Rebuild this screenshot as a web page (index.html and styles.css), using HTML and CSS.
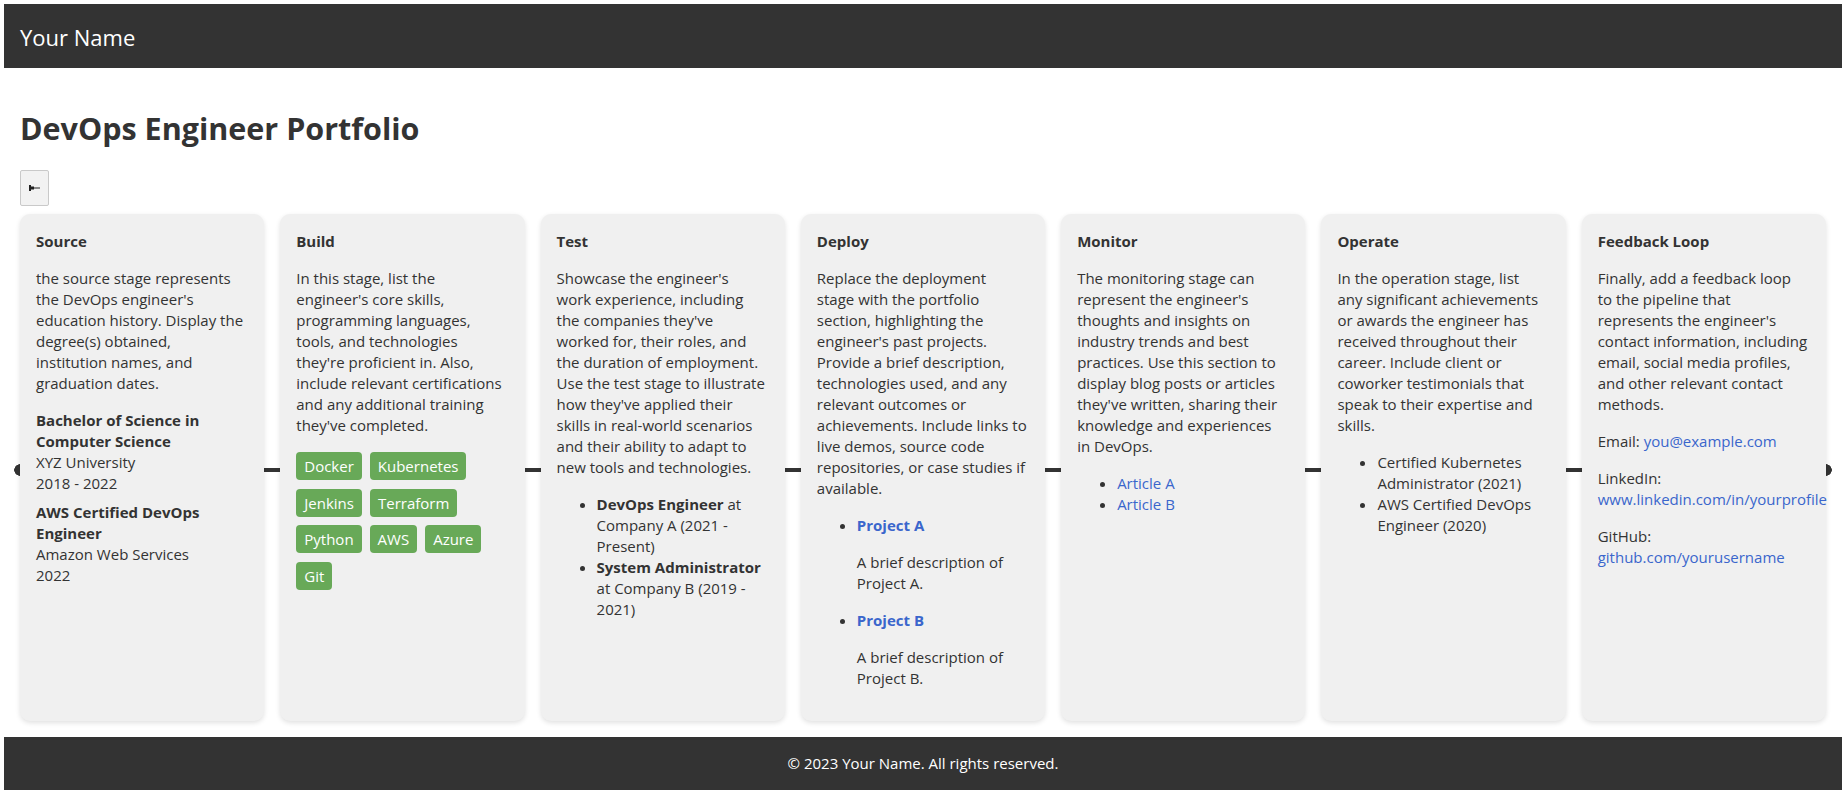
FILE: index.html
```html
<!DOCTYPE html>
<html lang="en">
<head>
<meta charset="utf-8">
<title>DevOps Engineer Portfolio</title>
<link rel="stylesheet" href="styles.css">
</head>
<body>
<header class="site-header">
  <div class="brand">Your Name</div>
</header>
<main class="main">
  <h1 class="page-title">DevOps Engineer Portfolio</h1>
  <button class="toggle-btn" type="button" aria-label="Toggle">
    <svg width="11" height="6" viewBox="0 0 11 6"><rect x="0" y="0" width="2" height="6" fill="#222"/><rect x="2" y="1.5" width="3" height="3" fill="#222"/><rect x="5" y="2.5" width="6" height="1" fill="#222"/></svg>
  </button>
  <div class="pipeline">
    <section class="stage">
      <h3 class="stage-title">Source</h3>
      <p>the source stage represents<br>the DevOps engineer's<br>education history. Display the<br>degree(s) obtained,<br>institution names, and<br>graduation dates.</p>
      <div class="edu"><strong>Bachelor of Science in<br>Computer Science</strong><br>XYZ University<br>2018 - 2022</div>
      <div class="edu"><strong>AWS Certified DevOps<br>Engineer</strong><br>Amazon Web Services<br>2022</div>
    </section>
    <section class="stage">
      <h3 class="stage-title">Build</h3>
      <p>In this stage, list the<br>engineer's core skills,<br>programming languages,<br>tools, and technologies<br>they're proficient in. Also,<br>include relevant certifications<br>and any additional training<br>they've completed.</p>
      <div class="tags">
        <span class="tag">Docker</span>
        <span class="tag">Kubernetes</span>
        <span class="tag">Jenkins</span>
        <span class="tag">Terraform</span>
        <span class="tag">Python</span>
        <span class="tag">AWS</span>
        <span class="tag">Azure</span>
        <span class="tag">Git</span>
      </div>
    </section>
    <section class="stage">
      <h3 class="stage-title">Test</h3>
      <p>Showcase the engineer's<br>work experience, including<br>the companies they've<br>worked for, their roles, and<br>the duration of employment.<br>Use the test stage to illustrate<br>how they've applied their<br>skills in real-world scenarios<br>and their ability to adapt to<br>new tools and technologies.</p>
      <ul class="list">
        <li><strong>DevOps Engineer</strong> at<br>Company A (2021 -<br>Present)</li>
        <li><strong>System Administrator</strong><br>at Company B (2019 -<br>2021)</li>
      </ul>
    </section>
    <section class="stage">
      <h3 class="stage-title">Deploy</h3>
      <p>Replace the deployment<br>stage with the portfolio<br>section, highlighting the<br>engineer's past projects.<br>Provide a brief description,<br>technologies used, and any<br>relevant outcomes or<br>achievements. Include links to<br>live demos, source code<br>repositories, or case studies if<br>available.</p>
      <ul class="list">
        <li><strong><a href="#" class="link">Project A</a></strong><p>A brief description of<br>Project A.</p></li>
        <li><strong><a href="#" class="link">Project B</a></strong><p>A brief description of<br>Project B.</p></li>
      </ul>
    </section>
    <section class="stage">
      <h3 class="stage-title">Monitor</h3>
      <p>The monitoring stage can<br>represent the engineer's<br>thoughts and insights on<br>industry trends and best<br>practices. Use this section to<br>display blog posts or articles<br>they've written, sharing their<br>knowledge and experiences<br>in DevOps.</p>
      <ul class="list">
        <li><a href="#" class="link">Article A</a></li>
        <li><a href="#" class="link">Article B</a></li>
      </ul>
    </section>
    <section class="stage">
      <h3 class="stage-title">Operate</h3>
      <p>In the operation stage, list<br>any significant achievements<br>or awards the engineer has<br>received throughout their<br>career. Include client or<br>coworker testimonials that<br>speak to their expertise and<br>skills.</p>
      <ul class="list">
        <li>Certified Kubernetes<br>Administrator (2021)</li>
        <li>AWS Certified DevOps<br>Engineer (2020)</li>
      </ul>
    </section>
    <section class="stage">
      <h3 class="stage-title">Feedback Loop</h3>
      <p>Finally, add a feedback loop<br>to the pipeline that<br>represents the engineer's<br>contact information, including<br>email, social media profiles,<br>and other relevant contact<br>methods.</p>
      <p>Email: <a href="#" class="link">you@example.com</a></p>
      <p>LinkedIn:<br><a href="#" class="link">www.linkedin.com/in/yourprofile</a></p>
      <p>GitHub:<br><a href="#" class="link">github.com/yourusername</a></p>
    </section>
  </div>
</main>
<footer class="site-footer">© 2023 Your Name. All rights reserved.</footer>
</body>
</html>
```
FILE: styles.css
```css
* { box-sizing: border-box; }

html { background: #fff; }

body {
  margin: 4px 4px 0;
  font-family: "Open Sans", "Noto Sans", sans-serif;
  font-size: 15px;
  line-height: 21px;
  color: #333;
  background: #fff;
}

.site-header {
  height: 64px;
  background: #333;
  color: #fff;
  display: flex;
  align-items: center;
  padding: 0 16px;
}

.brand {
  font-size: 22px;
  line-height: 30px;
  padding-top: 1px;
}

.main {
  padding: 16px 16px 16px;
}

.page-title {
  font-size: 30.5px;
  line-height: 40px;
  font-weight: 700;
  margin: 24px 0 22px;
  color: #333;
}

.toggle-btn {
  width: 29px;
  height: 36px;
  margin: 0 0 8px;
  padding: 0;
  display: flex;
  align-items: center;
  justify-content: center;
  background: #f2f2f2;
  border: 1px solid #c9c9c9;
  border-radius: 2px;
}

.pipeline {
  position: relative;
  display: flex;
  gap: 16px;
  align-items: stretch;
}

.pipeline::before {
  content: "";
  position: absolute;
  left: 0;
  right: 0;
  top: 50%;
  height: 4px;
  background: #333;
}

.pipeline::after {
  content: "";
  position: absolute;
  left: -6px;
  right: -6px;
  top: calc(50% - 4px);
  height: 12px;
  background:
    radial-gradient(circle at 6px 6px, #333 5.5px, transparent 6px) left / 12px 12px no-repeat,
    radial-gradient(circle at 6px 6px, #333 5.5px, transparent 6px) right / 12px 12px no-repeat;
}

.stage {
  position: relative;
  z-index: 1;
  flex: 1 1 0;
  min-width: 0;
  background: #f0f0f0;
  border-radius: 10px;
  box-shadow: 0 2px 5px rgba(0, 0, 0, 0.12);
  padding: 17px 16px 16px;
}

.stage-title {
  font-size: 15px;
  line-height: 21px;
  font-weight: 700;
  margin: 0 0 16px;
}

.stage p {
  margin: 16px 0;
}

.stage-title + p {
  margin-top: 0;
}

.edu {
  margin: 0 0 8px;
}

.tags {
  display: flex;
  flex-wrap: wrap;
  gap: 8.7px 8px;
}

.tag {
  display: inline-block;
  background: #68a958;
  color: #fff;
  border-radius: 4px;
  padding: 3px 8px;
  line-height: 22px;
}

.list {
  margin: 16px 0;
  padding-left: 40px;
}

.list li p {
  margin: 16px 0;
}

.link {
  color: #3a66cc;
  text-decoration: none;
}

.site-footer {
  background: #333;
  color: #fff;
  text-align: center;
  padding: 16px;
  line-height: 21px;
}
```
